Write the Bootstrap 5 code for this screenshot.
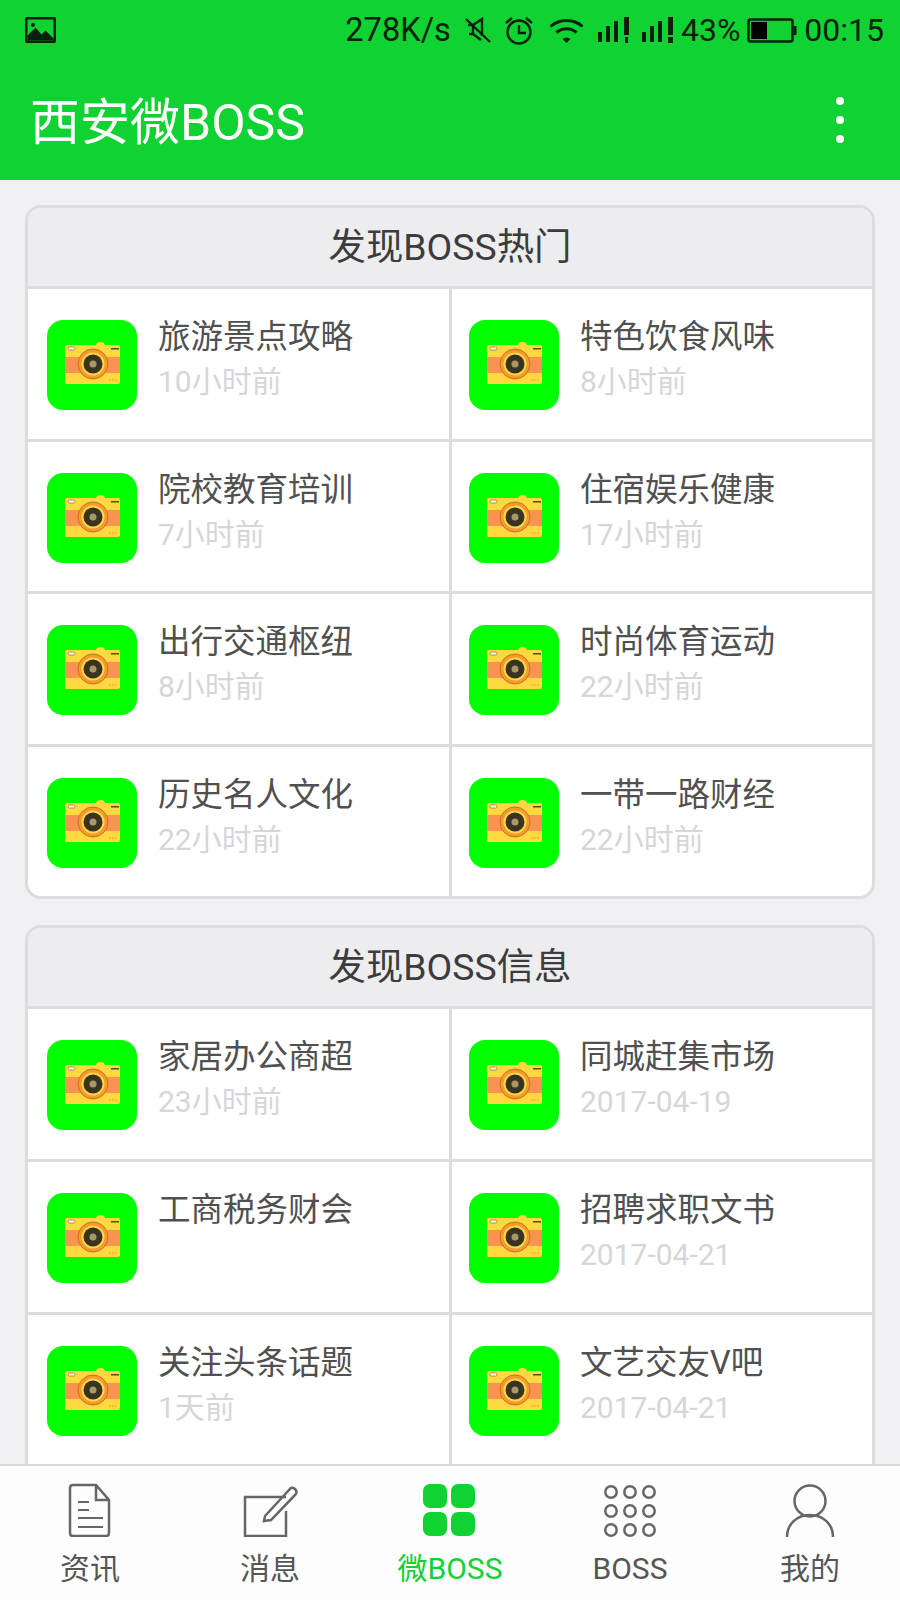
<!DOCTYPE html>
<html lang="zh-CN">
<head>
    <meta charset="UTF-8">
    <meta name="viewport" content="width=device-width, initial-scale=1.0">
    <title>西安微BOSS</title>
    <link href="https://cdn.jsdelivr.net/npm/bootstrap@5.3.0/dist/css/bootstrap.min.css" rel="stylesheet">
    <style>
        body { font-family: Roboto, "Noto Sans CJK SC", sans-serif; background: #f0eff2; }
        .app-top { background: #10d232; height: 180px; }
        .status-row { height: 60px; padding: 0 16px 0 25px; color: #06200c; font-size: 32px; line-height: 60px; }
        .net-speed { font-size: 32.6px; }
        .app-title { height: 120px; padding-left: 30px; color: #fff; font-size: 50px; line-height: 1; }
        .app-title span { margin-top: 5px; }
        .menu-dots { margin-right: 56px; }
        .feed { padding: 25px 25px 0 25px; background: #f0eff2; min-height: 0; }
        .sec-card { border: 3px solid #dcdbde; border-radius: 16px; margin-bottom: 26px; overflow: hidden; background: #fff; }
        .sec-head { height: 81px; line-height: 79px; background: #edecef; border-bottom: 3px solid #dcdbde; text-align: center; font-size: 37.4px; color: #3c3c3c; padding: 0; border-radius: 0; }
        .tile { height: 152.6px; padding: 31px 0 0 17px; border-bottom: 3px solid #dcdbde; }
        .tile:nth-last-child(-n+2) { height: 149.6px; border-bottom: 0; }
        .row > .tile-left { flex: 0 0 calc(50% + 2px); width: calc(50% + 2px); padding-left: 19px; border-right: 3px solid #dcdbde; }
        .row > .tile-right { flex: 0 0 calc(50% - 2px); width: calc(50% - 2px); }
        .tile-thumb { width: 90px; height: 90px; flex: none; }
        .tile-text { margin-left: 21px; }
        .tile-name { font-size: 32.5px; line-height: 40px; color: #505050; margin-top: -3px; }
        .tile-when { font-size: 30px; line-height: 40px; color: #d6d6d8; margin-top: 5px; }
        .tabbar { height: 136px; background: #fdfdfd; border-top: 2px solid #dcdcdc; flex: none; }
        .tab-item { width: 180px; color: #555; font-size: 30px; line-height: 36px; padding-top: 17px; }
        .tab-item svg { display: block; margin: 0 auto 14px; }
        .tab-on { color: #10d232; }
    </style>
</head>
<body>
    <svg width="0" height="0" class="position-absolute">
        <symbol id="camera" viewBox="0 0 90 90">
            <rect width="90" height="90" rx="16" fill="#00ff00"/>
            <path d="M49 26q0-4 4.500-4t4.500 4z" fill="#fdd83f"/>
            <rect x="18" y="25" width="55" height="39" rx="2" fill="#fdd83f"/>
            <rect x="18" y="37" width="55" height="16" fill="#fb9350"/>
            <rect x="21" y="27" width="7" height="3" rx="1.500" fill="#fff" stroke="#8a6a20" stroke-width=".7"/>
            <rect x="64" y="28" width="8" height="1.500" fill="#5a4a20"/>
            <circle cx="46" cy="44" r="15" fill="#f59a32" stroke="#c8721e" stroke-width="1"/>
            <circle cx="46" cy="44" r="11.500" fill="#fdd83f"/>
            <circle cx="46" cy="44" r="9.500" fill="#3b3322"/>
            <circle cx="46" cy="44" r="3.500" fill="#a89a68"/>
            <path d="M62 60h1.500M65 60h1.500M68 60h1.500" stroke="#e8913a" stroke-width="1"/>
        </symbol>
    </svg>

    <div class="vh-100 d-flex flex-column overflow-hidden">
        <div class="app-top flex-none">
            <div class="status-row d-flex align-items-center">
                <svg width="31" height="26" viewBox="0 0 31 26"><rect width="31" height="26" rx="2" fill="#06200c"/><rect x="2.500" y="2.500" width="26" height="21" fill="#10d232"/><path d="M2.500 23.500v-5l8-8 6 7 4-4 8 8v2z" fill="#06200c"/><circle cx="8" cy="8" r="2" fill="#06200c"/></svg>
                <span class="ms-auto net-speed">278K/s</span>
                <svg style="margin-left:14px" width="26" height="26" viewBox="0 0 26 26" fill="none" stroke="#06200c" stroke-width="2.400"><path d="M3 8h5l9-6v17M8 8v9H4M8 17l8 6"/><path d="M1 2l24 23"/></svg>
                <svg style="margin-left:13px" width="30" height="29" viewBox="0 0 30 29" fill="none" stroke="#06200c" stroke-width="2.400"><circle cx="15" cy="16" r="11.500"/><path d="M15 9v8h7M2 7l6-5M28 7l-6-5"/></svg>
                <svg style="margin-left:15px" width="35" height="25" viewBox="0 0 35 25" fill="none" stroke="#06200c" stroke-width="3"><path d="M1.500 8.500c9-8 23-8 32 0M7.500 14.500c6-5 14-5 20 0"/><path d="M13.500 21l4 4 4-4c-2.500-2-5.500-2-8 0z" fill="#06200c" stroke="none"/></svg>
                <svg style="margin-left:14px" width="32" height="26" viewBox="0 0 32 26" fill="#06200c"><rect y="15" width="4" height="10"/><rect x="8" y="9" width="4" height="16"/><rect x="16" y="4" width="4" height="21"/><rect x="26" y="0" width="5" height="18"/><rect x="27" y="20" width="3" height="6"/></svg>
                <svg style="margin-left:12px" width="32" height="26" viewBox="0 0 32 26" fill="#06200c"><rect y="15" width="4" height="10"/><rect x="8" y="9" width="4" height="16"/><rect x="16" y="4" width="4" height="21"/><rect x="26" y="0" width="5" height="18"/><rect x="26" y="20" width="5" height="6"/></svg>
                <span style="margin-left:7px">43%</span>
                <svg style="margin-left:7px" width="50" height="25" viewBox="0 0 50 25"><rect x="1.500" y="1.500" width="44" height="22" rx="2" fill="none" stroke="#06200c" stroke-width="2.500"/><rect x="4" y="4" width="16" height="17" fill="#000"/><rect x="46.500" y="8" width="3" height="9" fill="#06200c"/></svg>
                <span style="margin-left:7px">00:15</span>
            </div>
            <div class="app-title d-flex align-items-center justify-content-between">
                <span>西安微BOSS</span>
                <svg class="menu-dots" width="8" height="46" viewBox="0 0 8 46" fill="#fff"><circle cx="4" cy="4" r="4"/><circle cx="4" cy="23" r="4"/><circle cx="4" cy="42" r="4"/></svg>
            </div>
        </div>

        <div id="feed" class="feed flex-grow-1 overflow-hidden"></div>

        <div class="tabbar d-flex text-center">
            <div class="tab-item">
                <svg width="60" height="54" viewBox="0 0 60 54" fill="none" stroke="#666" stroke-width="2.500"><path d="M13 2h23l13 15v33q0 3-3 3H13q-3 0-3-3V5q0-3 3-3zM36 2v15h13"/><path d="M18 19h11M18 27h11M18 35h25M18 44h25" stroke-width="2"/></svg>
                资讯
            </div>
            <div class="tab-item">
                <svg width="60" height="54" viewBox="0 0 60 54" fill="none" stroke="#666" stroke-width="2.500"><path d="M46 14H5v39h41V28"/><path d="M25 33l24-26q3-4 6-1t0 6L31 37l-7 1z"/></svg>
                消息
            </div>
            <div class="tab-item tab-on">
                <svg width="60" height="54" viewBox="0 0 60 54" fill="#10d232"><rect x="3" y="1" width="24" height="24" rx="7"/><rect x="31" y="1" width="24" height="24" rx="7"/><rect x="3" y="29" width="24" height="24" rx="7"/><rect x="31" y="29" width="24" height="24" rx="7"/></svg>
                微BOSS
            </div>
            <div class="tab-item">
                <svg width="60" height="54" viewBox="0 0 60 54" fill="none" stroke="#666" stroke-width="2.500"><circle cx="11" cy="9" r="5.700"/><circle cx="30" cy="9" r="5.700"/><circle cx="49" cy="9" r="5.700"/><circle cx="11" cy="28" r="5.700"/><circle cx="30" cy="28" r="5.700"/><circle cx="49" cy="28" r="5.700"/><circle cx="11" cy="47" r="5.700"/><circle cx="30" cy="47" r="5.700"/><circle cx="49" cy="47" r="5.700"/></svg>
                BOSS
            </div>
            <div class="tab-item">
                <svg width="60" height="54" viewBox="0 0 60 54" fill="none" stroke="#666" stroke-width="2.500"><circle cx="30" cy="18" r="15.500"/><path d="M7 54c0-13 10-22 23-22s23 9 23 22"/></svg>
                我的
            </div>
        </div>
    </div>

    <script src="https://cdn.jsdelivr.net/npm/bootstrap@5.3.0/dist/js/bootstrap.bundle.min.js"></script>
    <script>
        const secciones = [
            { titulo: "发现BOSS热门", items: [
                ["旅游景点攻略", "10小时前"], ["特色饮食风味", "8小时前"],
                ["院校教育培训", "7小时前"], ["住宿娱乐健康", "17小时前"],
                ["出行交通枢纽", "8小时前"], ["时尚体育运动", "22小时前"],
                ["历史名人文化", "22小时前"], ["一带一路财经", "22小时前"]
            ]},
            { titulo: "发现BOSS信息", items: [
                ["家居办公商超", "23小时前"], ["同城赶集市场", "2017-04-19"],
                ["工商税务财会", ""], ["招聘求职文书", "2017-04-21"],
                ["关注头条话题", "1天前"], ["文艺交友V吧", "2017-04-21"],
                ["", ""], ["", ""]
            ]}
        ];

        document.getElementById("feed").innerHTML = secciones.map(sec => `
            <div class="card sec-card">
                <div class="card-header sec-head">${sec.titulo}</div>
                <div class="row g-0">
                    ${sec.items.map((it, i) => `
                        <div class="col-6 d-flex tile ${i % 2 === 0 ? "tile-left" : "tile-right"}">
                            ${it[0] ? `<svg class="tile-thumb"><use href="#camera"/></svg>
                            <div class="tile-text">
                                <div class="tile-name">${it[0]}</div>
                                <div class="tile-when">${it[1]}</div>
                            </div>` : ""}
                        </div>`).join("")}
                </div>
            </div>`).join("");
    </script>
</body>
</html>
